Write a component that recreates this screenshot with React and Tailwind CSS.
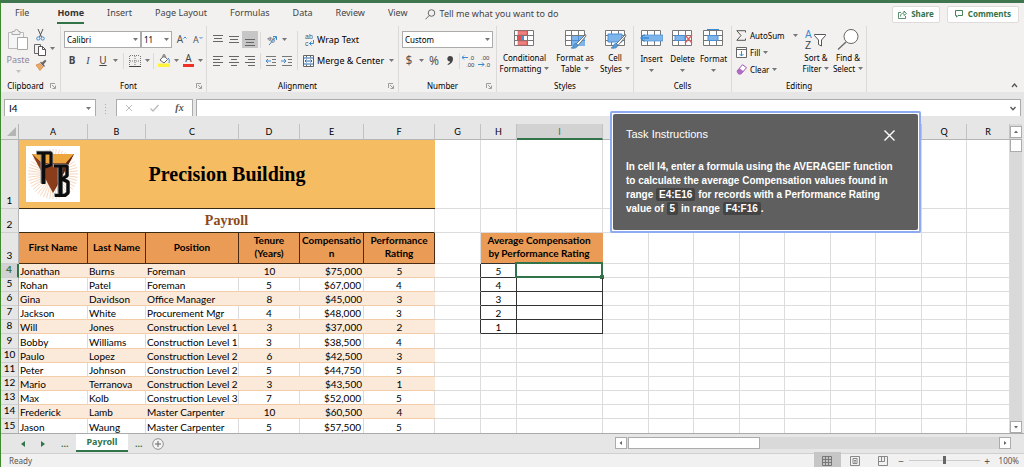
import React, { useState } from 'react';

const TABS = ['Home', 'Insert', 'Page Layout', 'Formulas', 'Data', 'Review', 'View'];

const COLUMNS = [
  { name: 'A', width: 'w-[69px]' },
  { name: 'B', width: 'w-[58px]' },
  { name: 'C', width: 'w-[93px]' },
  { name: 'D', width: 'w-[61px]' },
  { name: 'E', width: 'w-[64px]' },
  { name: 'F', width: 'w-[71px]' },
  { name: 'G', width: 'w-[46px]' },
  { name: 'H', width: 'w-[36px]' },
  { name: 'I', width: 'w-[86px]' },
  { name: 'J', width: 'w-[46px]' },
  { name: 'K', width: 'w-[45px]' },
  { name: 'L', width: 'w-[46px]' },
  { name: 'M', width: 'w-[45px]' },
  { name: 'N', width: 'w-[46px]' },
  { name: 'O', width: 'w-[45px]' },
  { name: 'P', width: 'w-[46px]' },
  { name: 'Q', width: 'w-[45px]' },
  { name: 'R', width: '' },
];

const EMPLOYEES = [
  ['Jonathan', 'Burns', 'Foreman', 10, '$75,000', 5],
  ['Rohan', 'Patel', 'Foreman', 5, '$67,000', 4],
  ['Gina', 'Davidson', 'Office Manager', 8, '$45,000', 3],
  ['Jackson', 'White', 'Procurement Mgr', 4, '$48,000', 3],
  ['Will', 'Jones', 'Construction Level 1', 3, '$37,000', 2],
  ['Bobby', 'Williams', 'Construction Level 1', 3, '$38,500', 4],
  ['Paulo', 'Lopez', 'Construction Level 2', 6, '$42,500', 3],
  ['Peter', 'Johnson', 'Construction Level 2', 5, '$44,750', 5],
  ['Mario', 'Terranova', 'Construction Level 2', 3, '$43,500', 1],
  ['Max', 'Kolb', 'Construction Level 3', 7, '$52,000', 5],
  ['Frederick', 'Lamb', 'Master Carpenter', 10, '$60,500', 4],
  ['Jason', 'Waung', 'Master Carpenter', 5, '$57,500', 5],
];

const RATINGS = [5, 4, 3, 2, 1];
const HEADERS = ['First Name', 'Last Name', 'Position', 'Tenure (Years)', 'Compensation', 'Performance Rating'];

function Svg({ w, h, children, className = '' }) {
  return (
    <svg
      width={w}
      height={h}
      viewBox={`0 0 ${w} ${h}`}
      fill="none"
      fontFamily="Liberation Sans, sans-serif"
      className={`shrink-0 ${className}`}
      aria-hidden="true"
    >
      {children}
    </svg>
  );
}

function Caret({ className = '' }) {
  return (
    <Svg w={5} h={3} className={className}>
      <path d="M0 0h5L2.5 3z" fill="#777" />
    </Svg>
  );
}

function Divider({ className = '' }) {
  return <span className={`w-px shrink-0 bg-[#dcdad9] ${className}`} />;
}

function Launcher() {
  return (
    <button aria-label="More options" className="w-[10px]">
      <Svg w={6} h={6}>
        <path d="M.5 5V.5H5M2 2l3 3M5.5 2.5v3h-3" stroke="#888" strokeWidth=".8" />
      </Svg>
    </button>
  );
}

function Group({ label, launcher, width, children }) {
  return (
    <section aria-label={label} className={`flex shrink-0 flex-col border-r border-[#dcdad9] ${width}`}>
      <div className="h-[54px]">{children}</div>
      <div className="flex h-[11px] items-center text-[8px] leading-[11px]">
        <span className="flex-1 text-center">{label}</span>
        {launcher && <Launcher />}
      </div>
    </section>
  );
}

function IconButton({ label, width = 'w-4', className = '', children }) {
  return (
    <button aria-label={label} className={`flex h-[17px] shrink-0 items-center justify-center ${width} ${className}`}>
      {children}
    </button>
  );
}

function Select({ label, value, width }) {
  return (
    <div className={`relative flex h-[17px] shrink-0 items-center ${width}`}>
      <select
        aria-label={label}
        className="h-full w-full appearance-none border border-[#ababab] bg-white pl-[2px] text-[8px] leading-none"
      >
        <option>{value}</option>
      </select>
      <Caret className="pointer-events-none absolute right-[3px]" />
    </div>
  );
}

function Lines({ rows }) {
  return (
    <Svg w={12} h={12}>
      {rows.map(([x, y, len]) => (
        <path key={y} d={`M${x} ${y}.5h${len}`} stroke="#666" />
      ))}
    </Svg>
  );
}

function Indent({ right }) {
  return (
    <Svg w={12} h={12}>
      <path d="M1 1.5h10M7 4.5h4M7 7.5h4M1 10.5h10" stroke="#777" />
      <path d={right ? 'M0 6h5M3 4l2 2-2 2' : 'M6 6H1M3 4L1 6l2 2'} stroke="#3b8ad0" />
    </Svg>
  );
}

function Decimals({ right }) {
  return (
    <Svg w={14} h={14}>
      <text x={right ? 3 : 7} y="6" fontSize="6" fill="#444">{right ? '.00' : '.0'}</text>
      <text x={right ? 7 : 4} y="13" fontSize="6" fill="#444">{right ? '.0' : '.00'}</text>
      <path d={right ? 'M0 10.5h6M4 8.5l2 2-2 2' : 'M6 3.5H0M2 1.500l-2 2 2 2'} stroke="#3b8ad0" />
    </Svg>
  );
}

function GridIcon({ children }) {
  return (
    <Svg w={23} h={20}>
      <path d="M1.5 1.5h19v15h-19zM1.5 6.5h19M1.5 11.5h19M7.5 1.5v15M14.5 1.5v15" fill="#fff" stroke="#777" />
      {children}
    </Svg>
  );
}

function Brush() {
  return (
    <>
      <path d="M21.5 5.5L12 15l2 1.5L22 7z" fill="#fff" stroke="#666" strokeWidth=".9" />
      <path d="M7 19c2 0 2-4 4.500-4.500 2 0 3 2 1.500 3.500s-4 1.500-6 1z" fill="#5b9bd5" stroke="#2e75b6" strokeWidth=".6" />
    </>
  );
}

function BigButton({ icon, lines, width }) {
  return (
    <button className={`flex shrink-0 flex-col items-center text-[8px] leading-[11px] ${width}`}>
      <span className="flex h-[23px] items-start">{icon}</span>
      <span className="whitespace-nowrap">{lines[0]}</span>
      <span className="flex items-center gap-[3px] whitespace-nowrap">
        {lines[1]}
        <Caret />
      </span>
    </button>
  );
}

function CellsButton({ icon, label }) {
  return (
    <button className="flex w-[31px] shrink-0 flex-col items-center text-[8px] leading-[11px]">
      <span className="flex h-[24px] items-start">{icon}</span>
      <span>{label}</span>
      <Caret className="mt-[5px]" />
    </button>
  );
}

function TabBar() {
  const [active, setActive] = useState('Home');
  return (
    <nav className="flex h-[22px] items-center pr-[5px] pl-[14px] text-[9px] text-[#444]">
      <button className="mr-[28px] h-[20px] border-b-2 border-transparent">File</button>
      <div className="flex h-[20px] gap-[23px]">
        {TABS.map((tab) => (
          <button
            key={tab}
            onClick={() => setActive(tab)}
            className={`h-[20px] border-b-2 ${
              active === tab ? 'border-[#33734a] font-bold text-[#333]' : 'border-transparent'
            }`}
          >
            {tab}
          </button>
        ))}
      </div>
      <button className="ml-[17px] flex items-center gap-[4px]">
        <Svg w={11} h={11}>
          <circle cx="6.500" cy="4" r="3.300" stroke="#666" />
          <path d="M4.200 6.500L.5 10.300" stroke="#666" />
        </Svg>
        Tell me what you want to do
      </button>
      <div className="ml-auto flex gap-[7px] text-[8px] font-bold text-[#33734a]">
        <button className="flex h-[17px] items-center gap-[4px] rounded-[2px] border border-[#dedcdb] bg-white px-[5px]">
          <Svg w={9} h={9}>
            <path d="M3 2.500H.5v6h7V6M2.500 6.500C2.500 4 4 3 6 3V1l2.500 2.500L6 5.500V4" stroke="#33734a" strokeWidth=".8" />
          </Svg>
          Share
        </button>
        <button className="flex h-[17px] items-center gap-[5px] rounded-[2px] border border-[#dedcdb] bg-white px-[7px]">
          <Svg w={8} h={8}>
            <path d="M.5.5h7v5H3L1.500 7.200V5.500h-1z" stroke="#33734a" strokeWidth=".9" />
          </Svg>
          Comments
        </button>
      </div>
    </nav>
  );
}

function Ribbon() {
  return (
    <div className="flex h-[67px] pt-px">
      <Group label="Clipboard" launcher width="w-[60px]">
        <div className="flex pt-[2px] pl-[6px]">
          <button className="flex w-[22px] flex-col items-center text-[9px] leading-[12px] text-[#8f8798]">
            <Svg w={22} h={24}>
              <path d="M1.500 4.500h15v16h-15z" fill="#f6f5f5" stroke="#b9b9b9" />
              <path d="M5 6.500V3.500h2.500a2 2 0 0 1 4 0H13v3z" fill="#f3f1f0" stroke="#aaa" />
              <path d="M10.500 9.500h10v12h-10z" fill="#fff" stroke="#a8a8a8" />
            </Svg>
            <span className="mt-[2px]">Paste</span>
            <Caret className="mt-[4px] opacity-40" />
          </button>
          <div className="flex w-[21px] flex-col items-center gap-[2px] pl-[2px]">
            <button aria-label="Cut" className="h-[13px]">
              <Svg w={9} h={12}>
                <path d="M2 0l3.500 8M7 0L3.500 8" stroke="#555" />
                <circle cx="2.300" cy="9.500" r="1.600" stroke="#3b8ad0" />
                <circle cx="6.700" cy="9.500" r="1.600" stroke="#3b8ad0" />
              </Svg>
            </button>
            <button aria-label="Copy" className="h-[14px]">
              <Svg w={13} h={12}>
                <path d="M4 9.500H.5v-9h6V3" stroke="#666" />
                <path d="M4.500 2.500h4l3 3v6h-7z" fill="#fff" stroke="#555" />
                <path d="M8.500 2.500v3h3" stroke="#555" />
              </Svg>
            </button>
            <button aria-label="Format Painter" className="h-[12px]">
              <Svg w={12} h={12}>
                <path d="M1 6l4-1.500 3 3.500-3 3.500z" fill="#f0a868" stroke="#d08038" strokeWidth=".7" />
                <path d="M5 3.500L9 8l1-1-1.300-1.800L11.500 2 10 .7 7 3.500 6 2.800z" fill="#666" />
              </Svg>
            </button>
          </div>
          <Caret className="mt-[19px]" />
        </div>
      </Group>

      <Group label="Font" launcher width="w-[146px]">
        <div className="flex flex-col gap-[4px] pt-[5px] pl-[3px]">
          <div className="flex">
            <Select label="Font" value="Calibri" width="w-[77px]" />
            <Select label="Font size" value="11" width="w-[31px]" />
            <IconButton label="Increase font size" className="ml-[2px] text-[10px] text-[#555]">
              A
              <Svg w={4} h={8}><path d="M.5 2.500L2 1l1.500 1.500" stroke="#3b8ad0" /></Svg>
            </IconButton>
            <IconButton label="Decrease font size" className="text-[9px] text-[#555]">
              A
              <Svg w={4} h={8}><path d="M.5 1L2 2.500 3.500 1" stroke="#3b8ad0" /></Svg>
            </IconButton>
          </div>
          <div className="flex items-center text-[10px] text-[#444]">
            <IconButton label="Bold" className="font-bold">B</IconButton>
            <IconButton label="Italic" className="font-['Liberation_Serif',serif] italic">I</IconButton>
            <IconButton label="Underline" className="underline" width="w-[14px]">U</IconButton>
            <IconButton label="Underline style" width="w-[10px]"><Caret /></IconButton>
            <Divider className="mx-[3px] h-[16px]" />
            <IconButton label="Borders">
              <Svg w={12} h={12}>
                <path d="M.5 1v10M11.500 1v10M6 1v10M1 .5h10M1 6h10" stroke="#777" strokeDasharray="1 1" />
                <path d="M0 11.500h12" stroke="#444" />
              </Svg>
            </IconButton>
            <IconButton label="Border style" width="w-[8px]"><Caret /></IconButton>
            <Divider className="mx-[2px] h-[16px]" />
            <IconButton label="Fill color">
              <Svg w={12} h={13}>
                <path d="M2 6l4-4.500L9.500 5.500 6 9z" fill="#fff" stroke="#666" />
                <path d="M5 4V1.500c0-1.500 2-1.500 2 0V4" stroke="#666" strokeWidth=".8" />
                <path d="M10 4c1.500 1 1.500 3 1 5" stroke="#3b8ad0" />
                <path d="M0 9.500h12V13H0z" fill="#fff33c" />
              </Svg>
            </IconButton>
            <IconButton label="Fill colors" width="w-[8px]"><Caret /></IconButton>
            <IconButton label="Font color" width="w-[17px]">
              <span className="flex flex-col items-center text-[10px] leading-[9px]">
                A
                <span className="mt-px h-[3px] w-[11px] bg-[#ee3124]" />
              </span>
            </IconButton>
            <IconButton label="Font colors" width="w-[7px]"><Caret /></IconButton>
          </div>
        </div>
      </Group>

      <Group label="Alignment" launcher width="w-[192px]">
        <div className="flex pt-[5px] pl-[3px]">
          <div className="flex flex-col gap-[4px]">
            <div className="flex items-center">
              <IconButton label="Top align"><Lines rows={[[1, 1, 10], [2, 4, 8], [1, 7, 10]]} /></IconButton>
              <IconButton label="Middle align"><Lines rows={[[1, 2, 10], [2, 5, 8], [1, 8, 10]]} /></IconButton>
              <IconButton label="Bottom align" className="bg-[#c6c6c6]"><Lines rows={[[1, 5, 10], [2, 8, 8], [1, 11, 10]]} /></IconButton>
              <Divider className="mx-[2px] h-[16px]" />
              <IconButton label="Orientation">
                <Svg w={13} h={13}>
                  <text x="2" y="6" fontSize="7" fill="#555" transform="rotate(35 2 6)">ab</text>
                  <path d="M4 12l7-8M8 3.500h3.500V7" stroke="#3b8ad0" />
                </Svg>
              </IconButton>
              <Caret className="ml-[3px]" />
            </div>
            <div className="flex items-center">
              <IconButton label="Align left"><Lines rows={[[1, 1, 10], [1, 4, 7], [1, 7, 10], [1, 10, 7]]} /></IconButton>
              <IconButton label="Center"><Lines rows={[[1, 1, 10], [3, 4, 6], [1, 7, 10], [3, 10, 6]]} /></IconButton>
              <IconButton label="Align right"><Lines rows={[[1, 1, 10], [4, 4, 7], [1, 7, 10], [4, 10, 7]]} /></IconButton>
              <Divider className="mx-[2px] h-[16px]" />
              <IconButton label="Decrease indent"><Indent /></IconButton>
              <IconButton label="Increase indent"><Indent right /></IconButton>
            </div>
          </div>
          <Divider className="mx-[2px] h-[39px]" />
          <div className="flex flex-1 flex-col gap-[4px] text-[9px]">
            <button className="flex h-[17px] items-center gap-[2px] pl-[3px]">
              <Svg w={12} h={14}>
                <text x="2" y="6" fontSize="7" fill="#555">ab</text>
                <text x="2" y="13" fontSize="7" fill="#555">c</text>
                <path d="M10.500 7v3.500H6.500M8.500 8.500l-2 2 2 2" stroke="#3b8ad0" />
              </Svg>
              Wrap Text
            </button>
            <button className="flex h-[17px] items-center gap-[3px] pl-[3px]">
              <Svg w={11} h={12}>
                <path d="M.5.5h10v11H.5zM3.500.5v2M7.500.5v2M3.500 9.500v2M7.500 9.500v2" fill="#fff" stroke="#666" />
                <path d="M.5 3h10v6H.5zM2 6h7M3.500 4.500L2 6l1.500 1.500M7.500 4.500L9 6 7.500 7.500" stroke="#2a6bb0" />
              </Svg>
              <span className="flex-1 text-left whitespace-nowrap">Merge &amp; Center</span>
              <Caret className="mr-[4px]" />
            </button>
          </div>
        </div>
      </Group>

      <Group label="Number" launcher width="w-[98px]">
        <div className="flex flex-col gap-[4px] pt-[5px] pl-[3px]">
          <Select label="Number format" value="Custom" width="w-[91px]" />
          <div className="flex items-center text-[12px] text-[#555]">
            <IconButton label="Currency" width="w-[14px]">$</IconButton>
            <IconButton label="Currencies" width="w-[10px]"><Caret /></IconButton>
            <IconButton label="Percent" width="w-[16px]">%</IconButton>
            <IconButton label="Comma style">
              <Svg w={6} h={9}>
                <path d="M3 0c2 0 3 1.300 3 3C6 6 4 8 1 9l-.5-.8C2 7.500 3 6.500 3 5.500 1.300 5.500.3 4.300.3 2.800.3 1.200 1.500 0 3 0z" fill="#444" />
              </Svg>
            </IconButton>
            <Divider className="mx-px h-[16px]" />
            <IconButton label="Increase decimal"><Decimals /></IconButton>
            <IconButton label="Decrease decimal"><Decimals right /></IconButton>
          </div>
        </div>
      </Group>

      <Group label="Styles" width="w-[137px]">
        <div className="flex pt-[3px] pl-[2px]">
          <BigButton
            width="w-[51px]"
            lines={['Conditional', 'Formatting']}
            icon={
              <GridIcon>
                <path d="M5 2h9v4H5zM5 12h9v4H5z" fill="#ee7f7f" stroke="#d95555" strokeWidth=".6" />
                <path d="M4 7h4v4H4z" fill="#e05050" />
                <path d="M8 7h3v4H8z" fill="#4a8fd6" />
              </GridIcon>
            }
          />
          <BigButton
            width="w-[50px]"
            lines={['Format as', 'Table']}
            icon={
              <GridIcon>
                <path d="M8 7h13v10H8z" fill="#7db4ea" />
                <path d="M8 11.500h13M14.500 7v10" stroke="#4a8fd6" />
                <Brush />
              </GridIcon>
            }
          />
          <BigButton
            width="w-[30px]"
            lines={['Cell', 'Styles']}
            icon={
              <GridIcon>
                <path d="M4 5h14v8H4z" fill="#7db4ea" stroke="#4a8fd6" />
                <Brush />
              </GridIcon>
            }
          />
        </div>
      </Group>

      <Group label="Cells" width="w-[98px]">
        <div className="flex pt-[3px] pl-[2px]">
          <CellsButton
            label="Insert"
            icon={
              <GridIcon>
                <path d="M4 6h19v6H4z" fill="#7db4ea" stroke="#4a8fd6" strokeWidth=".7" />
                <path d="M9 9H1M4.500 5.500L1 9l3.500 3.500" stroke="#3b8ad0" strokeWidth="1.300" />
              </GridIcon>
            }
          />
          <CellsButton
            label="Delete"
            icon={
              <GridIcon>
                <path d="M4 6.500h10v5H4z" fill="#7db4ea" stroke="#4a8fd6" />
                <path d="M14 6l7 8M21 6l-7 8" stroke="#e06060" strokeWidth="1.400" />
              </GridIcon>
            }
          />
          <CellsButton
            label="Format"
            icon={
              <GridIcon>
                <path d="M6 6.500h10v5H6z" fill="#7db4ea" stroke="#4a8fd6" />
                <path d="M5 .5h12" stroke="#3b8ad0" />
              </GridIcon>
            }
          />
        </div>
      </Group>

      <Group label="Editing" width="w-[135px]">
        <div className="flex pt-[3px] pl-[4px]">
          <div className="flex w-[65px] flex-col gap-[4px] text-[8px] leading-[13px]">
            <button className="flex h-[13px] items-center gap-[4px]">
              <Svg w={10} h={11}>
                <path d="M9.500 2.500V.7H.8L5 5.500.8 10.300h8.700V8.500" stroke="#555" />
              </Svg>
              <span className="flex-1 text-left">AutoSum</span>
              <Caret className="mr-[3px]" />
            </button>
            <button className="flex h-[13px] items-center gap-[3px]">
              <Svg w={11} h={11}>
                <path d="M.5.5h10v10H.5zM.5 2.500h10" fill="#fff" stroke="#666" />
                <path d="M5.500 4v5M3.500 7l2 2 2-2" stroke="#3b8ad0" />
              </Svg>
              Fill
              <Caret />
            </button>
            <button className="flex h-[13px] items-center gap-[3px]">
              <Svg w={11} h={11}>
                <path d="M1 7l5.500-6.300 4 3L5 10H2.500z" fill="#fff" stroke="#9b4fb0" />
                <path d="M1 7l2.500-2.800 4 3L5 10H2.500z" fill="#b06cc4" />
              </Svg>
              Clear
              <Caret />
            </button>
          </div>
          <BigButton
            width="w-[30px]"
            lines={['Sort &', 'Filter']}
            icon={
              <Svg w={22} h={22}>
                <text x="0" y="9" fontSize="10" fill="#3b8ad0">A</text>
                <text x="0" y="20" fontSize="10" fill="#444">Z</text>
                <path d="M9.500 5.500h11v1l-4 4.500v6l-3-1.500V11l-4-4.500z" fill="#fff" stroke="#555" />
              </Svg>
            }
          />
          <BigButton
            width="w-[34px]"
            lines={['Find &', 'Select']}
            icon={
              <Svg w={22} h={22}>
                <circle cx="14" cy="7.500" r="7" fill="#fff" stroke="#666" />
                <path d="M9 13l-8 7.500" stroke="#666" strokeWidth="1.300" />
              </Svg>
            }
          />
        </div>
      </Group>

      <button aria-label="Collapse ribbon" className="mt-auto mr-[6px] mb-[4px] ml-auto">
        <Svg w={7} h={5}><path d="M1 4l2.500-3L6 4" stroke="#555" strokeWidth="1.300" /></Svg>
      </button>
    </div>
  );
}

function FormulaBar() {
  return (
    <div className="flex h-[32px] items-start bg-[#e6e6e6] pt-[7px] pr-[3px] pl-[3px]">
      <div className="flex h-[17px] w-[92px] items-center border-t border-r border-l border-[#ababab] bg-white pr-[4px]">
        <input
          aria-label="Name box"
          defaultValue="I4"
          className="w-full pl-[4px] font-['Lato',sans-serif] text-[10px] outline-none"
        />
        <Caret />
      </div>
      <Svg w={20} h={17}>
        <path d="M9.500 5v10" stroke="#aaa" strokeDasharray="1 2" />
      </Svg>
      <div className="mr-[3px] flex h-[17px] w-[77px] items-center justify-around border-t border-r border-l border-[#ababab] bg-white">
        <button aria-label="Cancel">
          <Svg w={8} h={8}><path d="M1 1l6 6M7 1L1 7" stroke="#bbb" /></Svg>
        </button>
        <button aria-label="Enter">
          <Svg w={9} h={8}><path d="M.5 4.500L3 7l5.500-6" stroke="#bbb" strokeWidth="1.300" /></Svg>
        </button>
        <button aria-label="Insert function" className="font-['Liberation_Serif',serif] text-[10px] leading-none font-bold text-[#555] italic">fx</button>
      </div>
      <div className="flex h-[17px] flex-1 items-center border-t border-r border-l border-[#ababab] bg-white pr-[4px]">
        <input aria-label="Formula" className="w-full pl-[4px] text-[9px] outline-none" />
        <Svg w={6} h={5}><path d="M.5 1L3 3.700 5.500 1" stroke="#555" strokeWidth="1.300" /></Svg>
      </div>
    </div>
  );
}

function Logo() {
  const rays = Array.from({ length: 48 }, (_, i) => (i * Math.PI) / 24);
  return (
    <svg width="54" height="56" viewBox="0 0 54 56" role="img" aria-label="Precision Building logo" className="bg-white">
      {rays.map((a) => (
        <path
          key={a}
          d={`M27 28L${27 + 25 * Math.cos(a)} ${28 + 25 * Math.sin(a)}`}
          stroke="#f6d3b8"
          strokeWidth=".9"
        />
      ))}
      <path d="M6 8h42L27 47z" fill="#8a3d1a" />
      <path d="M6 8h42L40 17H16z" fill="#eda63b" />
      <path d="M48 8L40 17 27 47z" fill="#5f2610" />
      <g stroke="#8d969d" strokeWidth="5" strokeLinejoin="bevel" fill="none">
        <path d="M17 6v31" />
        <path d="M10 6.500h15v12l-6 2" strokeWidth="3.600" />
        <path d="M34 19v30" />
        <path d="M27 19.500h14v10l-5 3 6 3v11l-3 2.500H28" strokeWidth="3.600" />
      </g>
      <g stroke="#0d0d0d" strokeWidth="4" strokeLinejoin="bevel" fill="none">
        <path d="M17.500 7v31" />
        <path d="M11 7h14v12l-6 2" strokeWidth="3" />
        <path d="M34.500 20v29" />
        <path d="M28 20h13v10l-5 3 6 3v11l-3 2.500H29" strokeWidth="3.200" />
      </g>
    </svg>
  );
}

function RowHead({ n, selected }) {
  return (
    <th
      scope="row"
      className={`border-b border-[#cfcfcf] p-0 pb-[2px] text-center align-bottom text-[10px] leading-[11px] ${
        selected
          ? 'border-r-2 border-r-[#33734a] bg-[#d2d2d2] font-bold text-[#33734a]'
          : 'border-r border-r-[#b5b5b5] bg-[#e6e6e6] font-normal'
      }`}
    >
      {n}
    </th>
  );
}

function EmptyCells({ from }) {
  return COLUMNS.slice(from).map((c) => <td key={c.name} className="border-r border-b border-[#dcdcdc] p-0" />);
}

function DataRow({ employee, index }) {
  const shaded = index % 2 === 0;
  const rating = RATINGS[index];
  const cell = shaded
    ? 'bg-[#fbe9da] border-b border-[#f3cda8] p-0 pt-[2px] leading-[11px]'
    : 'border-r border-b border-r-[#dcdcdc] border-b-[#f3cda8] p-0 pt-[2px] leading-[11px]';
  const align = ['pl-px', 'pl-px', 'pl-px', 'text-center', 'text-right pr-[2px]', 'text-center'];
  return (
    <tr className={index % 6 === 5 ? 'h-[15px]' : 'h-[14px]'}>
      <RowHead n={index + 4} selected={index === 0} />
      {employee.map((value, i) => (
        <td key={i} className={cell}>
          <div className={`whitespace-nowrap ${align[i]}`}>{value}</div>
        </td>
      ))}
      {rating ? (
        <>
          <td className="border-r border-b border-r-[#333] border-b-[#dcdcdc] p-0" />
          <td className="border-r border-b border-[#333] p-0 pt-[2px] text-center leading-[11px]">{rating}</td>
          <td className="relative border-r border-b border-[#333] p-0">
            {index === 0 && (
              <span className="absolute -inset-px -left-[2px] -top-[2px] border-2 border-[#33734a]">
                <span className="absolute -right-[3px] -bottom-[3px] h-[4px] w-[4px] bg-[#33734a]" />
              </span>
            )}
          </td>
          <EmptyCells from={9} />
        </>
      ) : (
        <EmptyCells from={6} />
      )}
    </tr>
  );
}

function Sheet() {
  return (
    <div className="min-w-0 flex-1 overflow-hidden bg-white">
      <table className="w-full table-fixed border-separate border-spacing-0 font-['Lato',sans-serif] text-[10px] leading-[13px]">
        <colgroup>
          <col className="w-[18px]" />
          {COLUMNS.map((c) => <col key={c.name} className={c.width} />)}
        </colgroup>
        <thead>
          <tr className="h-[16px] bg-[#e6e6e6] text-[9px]">
            <th className="border-r border-b border-[#b5b5b5] p-0">
              <Svg w={17} h={13}><path d="M15 2v9H6z" fill="#b5b5b5" /></Svg>
            </th>
            {COLUMNS.map((c) => (
              <th
                key={c.name}
                scope="col"
                className={`border-r border-r-[#c2c2c2] p-0 font-normal ${
                  c.name === 'I' ? 'border-b-2 border-b-[#33734a] bg-[#d2d2d2] text-[#33734a]' : 'border-b border-b-[#b5b5b5]'
                }`}
              >
                {c.name}
              </th>
            ))}
          </tr>
        </thead>
        <tbody>
          <tr className="h-[69px]">
            <RowHead n={1} />
            <td colSpan={6} className="border-b border-[#3a2a12] bg-[#f5bc62] p-0">
              <div className="grid grid-cols-[54px_1fr_54px] items-center px-[7px]">
                <Logo />
                <h1 className="text-center font-['Liberation_Serif',serif] text-[20px] leading-[24px] font-bold">Precision Building</h1>
              </div>
            </td>
            <EmptyCells from={6} />
          </tr>
          <tr className="h-[24px]">
            <RowHead n={2} />
            <td colSpan={6} className="border-r border-b border-r-[#dcdcdc] border-b-[#3a2a12] p-0 text-center font-['Liberation_Serif',serif] text-[14px] font-bold text-[#8b4a1c]">
              Payroll
            </td>
            <EmptyCells from={6} />
          </tr>
          <tr className="h-[31px]">
            <RowHead n={3} />
            {HEADERS.map((h) => (
              <th key={h} scope="col" className="border-r border-b border-[#4a2c14] bg-[#ea9b56] px-px pt-0 pb-[2px] font-bold">
                <span className={h === 'Compensation' ? 'break-all' : ''}>{h}</span>
              </th>
            ))}
            <td className="border-r border-b border-[#dcdcdc] p-0" />
            <th colSpan={2} scope="colgroup" className="border-b border-[#333] bg-[#ea9b56] p-0 pr-[6px] pb-[2px] font-bold">
              Average Compensation
              <br />
              by Performance Rating
            </th>
            <EmptyCells from={9} />
          </tr>
          {EMPLOYEES.map((employee, i) => <DataRow key={i} employee={employee} index={i} />)}
        </tbody>
      </table>
    </div>
  );
}

function ScrollButton({ label, d, className = '' }) {
  return (
    <button aria-label={label} className={`flex h-[12px] w-[12px] shrink-0 items-center justify-center border border-[#ababab] bg-white ${className}`}>
      <Svg w={6} h={6}><path d={d} fill="#666" /></Svg>
    </button>
  );
}

function SheetBar() {
  return (
    <div className="flex h-[20px] shrink-0 items-start border-t border-[#ababab] bg-[#e6e6e6] pr-[13px] pl-[20px] text-[9px] text-[#33734a]">
      <div className="flex h-[19px] items-center">
        <button aria-label="Previous sheet" className="w-[20px]">
          <Svg w={4} h={6}><path d="M4 0v6L0 3z" fill="#33734a" /></Svg>
        </button>
        <button aria-label="Next sheet" className="w-[20px]">
          <Svg w={4} h={6}><path d="M0 0v6l4-3z" fill="#33734a" /></Svg>
        </button>
        <button className="w-[15px] text-left font-bold">...</button>
        <button className="-mt-px h-[18px] w-[52px] border-b-2 border-[#33734a] bg-white font-bold">Payroll</button>
        <button className="ml-[7px] w-[17px] text-left font-bold">...</button>
        <button aria-label="New sheet">
          <Svg w={12} h={12}>
            <circle cx="6" cy="6" r="5.300" fill="#f3f3f3" stroke="#888" strokeWidth=".9" />
            <path d="M3 6h6M6 3v6" stroke="#666" />
          </Svg>
        </button>
      </div>
      <div className="mt-[3px] ml-auto flex w-[396px] bg-[#d9d9d9]">
        <ScrollButton label="Scroll left" d="M4 1v4L1.500 3z" className="mr-px" />
        <span className="h-[12px] w-[132px] border border-[#ababab] bg-white" />
        <ScrollButton label="Scroll right" d="M2 1v4l2.500-2z" className="ml-auto" />
      </div>
    </div>
  );
}

function StatusBar() {
  return (
    <footer className="flex h-[14px] shrink-0 items-center border-t border-[#d0d0d0] bg-[#f1f1f1] pr-[5px] pl-[8px] text-[8px] text-[#555]">
      <span>Ready</span>
      <div className="ml-auto flex items-center">
        <IconButton label="Normal view" width="w-[27px]" className="bg-[#c6c6c6]">
          <Svg w={10} h={10}><path d="M.5.5h9v9h-9zM3.500 0v10M6.500 0v10M0 3.500h10M0 6.500h10" stroke="#777" /></Svg>
        </IconButton>
        <IconButton label="Page layout view" width="w-[28px]">
          <Svg w={10} h={10}><path d="M.5.5h9v9h-9zM3 2.500h4v5H3zM4 4.500h2M4 6h2" stroke="#888" /></Svg>
        </IconButton>
        <IconButton label="Page break view" width="w-[28px]">
          <Svg w={10} h={10}><path d="M.5.5h9v9h-9zM.5 5.500h6v-5M3.500.5v5" stroke="#888" /></Svg>
        </IconButton>
        <button aria-label="Zoom out" className="w-[9px] text-[10px] leading-none">−</button>
        <input
          type="range"
          aria-label="Zoom"
          defaultValue="50"
          className="mx-[3px] h-[10px] w-[71px] appearance-none bg-transparent [&::-webkit-slider-runnable-track]:h-px [&::-webkit-slider-runnable-track]:bg-[#cccccc] [&::-webkit-slider-thumb]:-mt-[4px] [&::-webkit-slider-thumb]:h-[8px] [&::-webkit-slider-thumb]:w-[3px] [&::-webkit-slider-thumb]:appearance-none [&::-webkit-slider-thumb]:bg-[#666666]"
        />
        <button aria-label="Zoom in" className="mr-[7px] w-[9px] text-[10px] leading-none">+</button>
        <span>100%</span>
      </div>
    </footer>
  );
}

function Code({ children }) {
  return <span className="rounded-[2px] bg-[#444] px-[3px] py-px">{children}</span>;
}

function TaskInstructions({ onClose }) {
  return (
    <aside
      role="dialog"
      aria-label="Task Instructions"
      className="absolute top-[108px] right-[103px] w-[311px] rounded-[2px] border-2 border-[#8fabf0] bg-white p-px font-['Liberation_Sans',sans-serif] text-white"
    >
      <div className="rounded-[2px] bg-[#5f5f5f] px-[13px] pt-[13px] pb-[14px]">
        <div className="flex items-start justify-between pr-[10px]">
          <h2 className="text-[11px] leading-[14px]">Task Instructions</h2>
          <button aria-label="Close" onClick={onClose} className="mt-[3px]">
            <Svg w={11} h={11}><path d="M.5.5l10 10M10.500.5l-10 10" stroke="#fff" strokeWidth="1.400" /></Svg>
          </button>
        </div>
        <p className="mt-[19px] text-[10px] leading-[14px] font-bold">
          In cell I4, enter a formula using the AVERAGEIF function
          <br />
          to calculate the average Compensation values found in
          <br />
          range <Code>E4:E16</Code> for records with a Performance Rating
          <br />
          value of <Code>5</Code> in range <Code>F4:F16</Code>.
        </p>
      </div>
    </aside>
  );
}

function App() {
  const [showTask, setShowTask] = useState(true);

  return (
    <div className="relative flex h-screen flex-col overflow-hidden border-t-[3px] border-l border-t-[#3f7650] border-l-[#3f8a2c] bg-[#f3f1f0] font-['Noto_Sans',sans-serif] text-black">
      <TabBar />
      <Ribbon />
      <FormulaBar />
      <div className="flex min-h-0 flex-1 bg-[#e6e6e6] pr-[2px]">
        <Sheet />
        <div className="flex w-[12px] flex-col bg-[#d9d9d9] pt-[2px]">
          <ScrollButton label="Scroll up" d="M1 4h4L3 1.500z" className="mb-px" />
          <span className="h-[13px] border border-[#ababab] bg-white" />
          <ScrollButton label="Scroll down" d="M1 2h4L3 4.500z" className="mt-auto" />
        </div>
      </div>
      <SheetBar />
      <StatusBar />
      {showTask && <TaskInstructions onClose={() => setShowTask(false)} />}
    </div>
  );
}

export default App;
